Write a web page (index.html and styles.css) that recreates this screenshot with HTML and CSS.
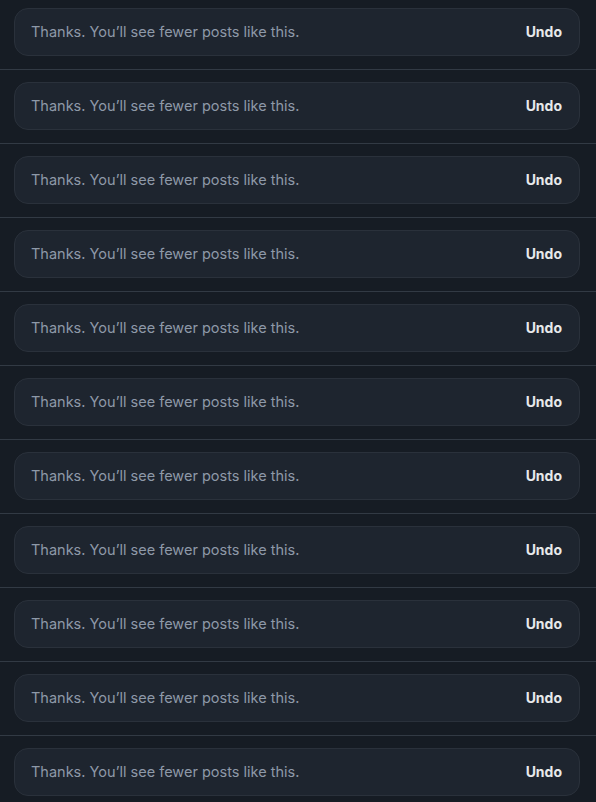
FILE: index.html
```html
<!DOCTYPE html>
<html lang="en">
<head>
    <meta charset="UTF-8">
    <meta name="viewport" content="width=device-width, initial-scale=1.0">
    <title>Feed</title>
    <link rel="stylesheet" href="styles.css">
</head>
<body>
    <div class="feed">
        <div class="row"><div class="notice"><span class="msg">Thanks. You’ll see fewer posts like this.</span><button class="undo">Undo</button></div></div>
        <div class="row"><div class="notice"><span class="msg">Thanks. You’ll see fewer posts like this.</span><button class="undo">Undo</button></div></div>
        <div class="row"><div class="notice"><span class="msg">Thanks. You’ll see fewer posts like this.</span><button class="undo">Undo</button></div></div>
        <div class="row"><div class="notice"><span class="msg">Thanks. You’ll see fewer posts like this.</span><button class="undo">Undo</button></div></div>
        <div class="row"><div class="notice"><span class="msg">Thanks. You’ll see fewer posts like this.</span><button class="undo">Undo</button></div></div>
        <div class="row"><div class="notice"><span class="msg">Thanks. You’ll see fewer posts like this.</span><button class="undo">Undo</button></div></div>
        <div class="row"><div class="notice"><span class="msg">Thanks. You’ll see fewer posts like this.</span><button class="undo">Undo</button></div></div>
        <div class="row"><div class="notice"><span class="msg">Thanks. You’ll see fewer posts like this.</span><button class="undo">Undo</button></div></div>
        <div class="row"><div class="notice"><span class="msg">Thanks. You’ll see fewer posts like this.</span><button class="undo">Undo</button></div></div>
        <div class="row"><div class="notice"><span class="msg">Thanks. You’ll see fewer posts like this.</span><button class="undo">Undo</button></div></div>
        <div class="row"><div class="notice"><span class="msg">Thanks. You’ll see fewer posts like this.</span><button class="undo">Undo</button></div></div>
    </div>
</body>
</html>
```

FILE: styles.css
```css
/* General Styles */
body {
    margin: 0;
    font-family: Inter, "Noto Sans", sans-serif;
    background-color: #161c24;
    overflow: hidden;
}

.row {
    padding: 12px 16px 13px 14px;
    border-bottom: 1px solid #323a44;
}

.row:first-child {
    padding-top: 8px;
}

.notice {
    display: flex;
    align-items: center;
    justify-content: space-between;
    box-sizing: border-box;
    height: 48px;
    padding: 0 17px 2px 16px;
    background-color: #1e252f;
    border: 1px solid #2a313b;
    border-radius: 14px;
}

.msg {
    font-size: 14.5px;
    color: #8e99a8;
}

.undo {
    background: none;
    border: none;
    padding: 0;
    font-family: inherit;
    font-size: 14px;
    font-weight: 700;
    color: #e7e9ea;
    cursor: pointer;
}
```
